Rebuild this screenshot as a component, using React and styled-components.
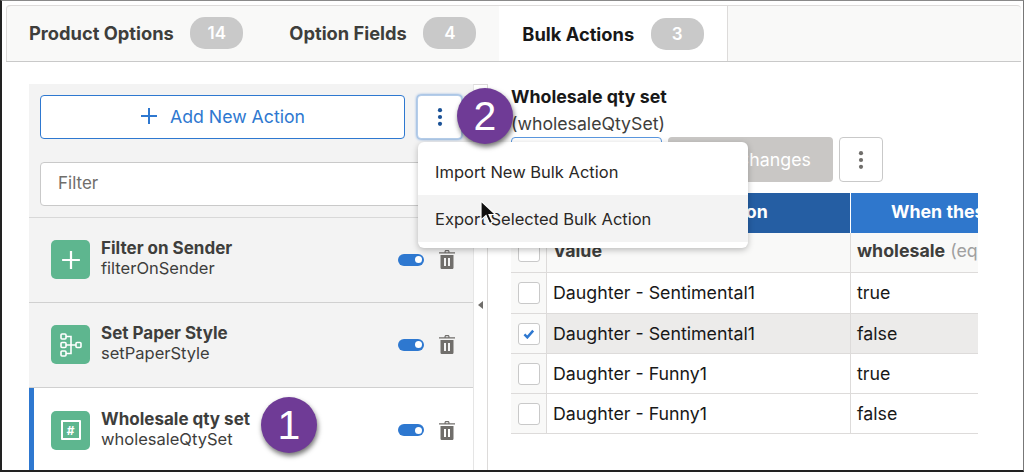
import styled, { createGlobalStyle } from 'styled-components';

const GlobalStyle = createGlobalStyle`
  html, body {
    margin: 0;
    padding: 0;
    background: #fff;
  }
  * {
    box-sizing: border-box;
  }
`;

const tabs = [
  { label: 'Product Options', count: 14 },
  { label: 'Option Fields', count: 4 },
  { label: 'Bulk Actions', count: 3, active: true },
];

const actions = [
  { title: 'Filter on Sender', name: 'filterOnSender', icon: 'plus' },
  { title: 'Set Paper Style', name: 'setPaperStyle', icon: 'tree' },
  { title: 'Wholesale qty set', name: 'wholesaleQtySet', icon: 'hash', selected: true },
];

const rows = [
  { value: 'Daughter - Sentimental1', wholesale: 'true' },
  { value: 'Daughter - Sentimental1', wholesale: 'false', checked: true },
  { value: 'Daughter - Funny1', wholesale: 'true' },
  { value: 'Daughter - Funny1', wholesale: 'false' },
];

const KebabIcon = () => (
  <svg width="6" height="18" viewBox="0 0 6 18" fill="currentColor">
    <circle cx="3" cy="2.2" r="2.1" />
    <circle cx="3" cy="9" r="2.1" />
    <circle cx="3" cy="15.8" r="2.1" />
  </svg>
);

const PlusIcon = ({ size = 18, width = 2 }) => (
  <svg width={size} height={size} viewBox="0 0 18 18" stroke="currentColor" strokeWidth={width} fill="none">
    <path d="M9 1v16M1 9h16" />
  </svg>
);

const TreeIcon = () => (
  <svg width="22" height="24" viewBox="0 0 22 24" stroke="#fff" strokeWidth="1.6" fill="none">
    <rect x="1" y="1" width="5" height="5" rx="1" />
    <rect x="1" y="9.5" width="5" height="5" rx="1" />
    <rect x="1" y="18" width="5" height="5" rx="1" />
    <rect x="16" y="9.5" width="5" height="5" rx="1" />
    <path d="M6 3.5h5v17H6M6 12h10" />
  </svg>
);

const TrashIcon = () => (
  <svg width="16" height="19" viewBox="0 0 16 19" fill="#706e6b">
    <path d="M5.5 2.2V1.5C5.5.7 6.2 0 7 0h2c.8 0 1.5.7 1.5 1.5v.7H16v1.3H0V2.2zm1.2 0h2.6v-.7c0-.2-.1-.3-.3-.3H7c-.2 0-.3.1-.3.3z" />
    <path fillRule="evenodd" d="M1.5 5h13v12.4c0 .9-.7 1.600-1.600 1.600H3.100c-.9 0-1.600-.7-1.600-1.600zM5 8v8h2V8zm4 0v8h2V8z" />
  </svg>
);

const CheckIcon = () => (
  <svg width="12" height="10" viewBox="0 0 14 12" fill="none" stroke="#2e78d0" strokeWidth="3">
    <path d="M1.5 6.500l3.500 3.500 7-8" />
  </svg>
);

const Frame = styled.div`
  width: 1024px;
  height: 472px;
  overflow: hidden;
  position: relative;
  display: flex;
  flex-direction: column;
  padding: 4px 2px 0 4px;
  background: #fff;
  border-top: 1px solid #8a8a8a;
  border-left: 2px solid #222;
  border-right: 1px solid #777;
  border-bottom: 2px solid #222;
  font-family: Inter, "Liberation Sans", sans-serif;
  color: #181818;
`;

const TabBar = styled.nav`
  display: flex;
  flex: 0 0 56px;
  background: #f9f9f8;
  border-top: 1px solid #dddbda;
  border-bottom: 1px solid #c9c9c9;
  border-radius: 4px 4px 0 0;
  box-shadow: inset 1px 0 0 #dddbda;
`;

const Tab = styled.div`
  display: flex;
  align-items: center;
  gap: 16.5px;
  height: ${(p) => (p.$active ? '55px' : '54px')};
  padding: 0 23px;
  font-size: 18.3px;
  font-weight: 700;
  color: ${(p) => (p.$active ? '#181818' : '#3e3e3c')};
  background: ${(p) => (p.$active ? '#fff' : 'transparent')};
  border-right: ${(p) => (p.$active ? '1px solid #dddbda' : 'none')};
`;

const TabCount = styled.span`
  display: flex;
  align-items: center;
  justify-content: center;
  min-width: 53px;
  height: 32px;
  padding: 0 17px;
  border-radius: 15px;
  background: #c9c9c9;
  color: #fff;
  font-size: 17px;
  font-weight: 600;
`;

const Body = styled.div`
  flex: 1;
  min-height: 0;
  display: flex;
  align-items: stretch;
  padding: 22px 0 0 23px;
`;

const Sidebar = styled.aside`
  flex: 0 0 444px;
  display: flex;
  flex-direction: column;
  background: #f3f3f3;
`;

const SidebarHead = styled.div`
  flex: 0 0 134px;
  display: flex;
  flex-direction: column;
  gap: 23px;
  padding: 11px 11px 0;
  border-bottom: 1px solid #d8d8d8;
`;

const AddRow = styled.div`
  display: flex;
  gap: 12px;
`;

const AddButton = styled.button`
  flex: 1;
  height: 44px;
  display: flex;
  align-items: center;
  justify-content: center;
  gap: 12px;
  padding: 0 0 2px;
  background: #fff;
  color: #2e78d0;
  border: 1px solid #2e78d0;
  border-radius: 4px;
  font: inherit;
  font-size: 17.7px;
`;

const KebabButton = styled.button`
  flex: 0 0 ${(p) => (p.$muted ? '44px' : '45px')};
  height: ${(p) => (p.$muted ? '45px' : '44px')};
  display: flex;
  align-items: center;
  justify-content: center;
  padding: 0;
  background: #fff;
  color: ${(p) => (p.$muted ? '#706e6b' : '#1b5297')};
  border: 1px solid ${(p) => (p.$muted ? '#c9c9c9' : '#b5cde9')};
  border-radius: 4px;
  box-shadow: ${(p) => (p.$muted ? 'none' : '0 0 3px #2e78d0')};
`;

const FilterInput = styled.input`
  height: 44px;
  padding: 0 17px 2px;
  background: #fff;
  border: 1px solid #c9c9c9;
  border-radius: 4px;
  font: inherit;
  font-size: 17px;
  &::placeholder {
    color: #706e6b;
    opacity: 1;
  }
`;

const ActionRow = styled.div`
  flex: 0 0 85px;
  display: flex;
  align-items: center;
  padding: 0 18px 1px ${(p) => (p.$selected ? '17px' : '22px')};
  background: ${(p) => (p.$selected ? '#fff' : 'transparent')};
  border-left: ${(p) => (p.$selected ? '5px solid #2e78d0' : 'none')};
  border-bottom: ${(p) => (p.$selected ? 'none' : '1px solid #d0d0d0')};
`;

const ActionIcon = styled.div`
  flex: 0 0 39px;
  height: 39px;
  display: flex;
  align-items: center;
  justify-content: center;
  margin-right: 11px;
  border-radius: 5px;
  background: #5eb68f;
  color: #fff;
`;

const HashBox = styled.span`
  width: 20px;
  height: 20px;
  display: flex;
  align-items: center;
  justify-content: center;
  border: 2px solid #fff;
  border-radius: 1px;
  font-size: 12px;
  font-weight: 700;
  font-style: italic;
`;

const ActionText = styled.div`
  flex: 1;
  display: flex;
  flex-direction: column;
  padding-bottom: 3px;
  font-size: 16.5px;
  line-height: 20px;
  color: #3e3e3c;
`;

const ActionTitle = styled.strong`
  font-size: 17px;
  font-weight: 700;
`;

const ToggleTrack = styled.span`
  position: relative;
  width: 26px;
  height: 12px;
  margin-right: 15px;
  border-radius: 6px;
  background: #2e78d0;
  &::after {
    content: '';
    position: absolute;
    top: 2.5px;
    right: 2.5px;
    width: 7px;
    height: 7px;
    border-radius: 50%;
    background: #fff;
  }
`;

const Splitter = styled.div`
  flex: 0 0 15px;
  display: flex;
  align-items: center;
  justify-content: center;
  padding-top: 54px;
  background: #fff;
  border-top: 1px solid #dddbda;
  border-left: 1px solid #e5e5e5;
  border-right: 1px solid #dddbda;
`;

const SplitterArrow = styled.span`
  width: 0;
  height: 0;
  border-top: 4px solid transparent;
  border-bottom: 4px solid transparent;
  border-right: 5px solid #706e6b;
`;

const Detail = styled.section`
  flex: 0 0 467px;
  margin-left: 23px;
  margin-top: 1px;
  display: flex;
  flex-direction: column;
`;

const DetailTitle = styled.h2`
  margin: 0 0 2px;
  font-size: 17.8px;
  line-height: 24px;
  font-weight: 700;
`;

const DetailName = styled.div`
  font-size: 17.7px;
  line-height: 26px;
  color: #3e3e3c;
`;

const ButtonRow = styled.div`
  display: flex;
  gap: 6px;
`;

const OutlineButton = styled.button`
  flex: 0 0 151px;
  height: 45px;
  background: #fff;
  color: #2e78d0;
  border: 1px solid #5a97de;
  border-radius: 4px;
  font: inherit;
  font-size: 16px;
`;

const DisabledButton = styled.button`
  flex: 0 0 165px;
  height: 45px;
  background: #c9c7c5;
  color: #fff;
  border: none;
  border-radius: 4px;
  font: inherit;
  font-size: 17.8px;
`;

const Table = styled.div`
  margin-top: 11px;
  display: grid;
  grid-template-columns: 36px 304px 127px;
  overflow: hidden;
  font-size: 17.8px;
`;

const HeadCell = styled.div`
  height: 40px;
  display: flex;
  align-items: center;
  justify-content: ${(p) => (p.$clip ? 'flex-start' : 'center')};
  padding: 0 0 3px ${(p) => (p.$clip ? '40px' : '0')};
  white-space: nowrap;
  overflow: hidden;
  background: ${(p) => (p.$dark ? '#255ea3' : '#2f77cc')};
  border-right: ${(p) => (p.$divided ? '1px solid #fff' : 'none')};
  color: #fff;
  font-weight: 700;
`;

const CheckCell = styled.div`
  height: ${(p) => (p.$tall ? '41px' : '40px')};
  display: flex;
  align-items: center;
  justify-content: center;
  padding-bottom: ${(p) => (p.$head ? '4px' : '0')};
  background: #f9f9f8;
  border-bottom: 1px solid #dddbda;
  border-right: 1px solid #dddbda;
`;

const Cell = styled.div`
  height: ${(p) => (p.$tall ? '41px' : '40px')};
  display: flex;
  align-items: center;
  padding: 0 0 ${(p) => (p.$head ? '5px' : '1px')} 6px;
  white-space: nowrap;
  overflow: hidden;
  background: ${(p) => (p.$head ? '#f9f9f8' : p.$selected ? '#ecebea' : '#fff')};
  border-bottom: 1px solid #dddbda;
  border-right: ${(p) => (p.$divided ? '1px solid #dddbda' : 'none')};
  color: ${(p) => (p.$head ? '#3e3e3c' : '#181818')};
  font-weight: ${(p) => (p.$head ? 700 : 400)};
`;

const Operator = styled.span`
  margin-left: 5px;
  font-weight: 400;
  color: #a0a0a0;
`;

const CheckBox = styled.span`
  width: 22px;
  height: 22px;
  display: flex;
  align-items: center;
  justify-content: center;
  background: #fff;
  border: 1px solid #c9c9c9;
  border-radius: 3px;
`;

const Menu = styled.ul`
  position: absolute;
  top: 141px;
  left: 416px;
  width: 330px;
  margin: 0;
  padding: 6px 0;
  list-style: none;
  background: #fff;
  border-radius: 6px;
  box-shadow: 0 2px 6px rgba(0, 0, 0, 0.25);
  font-size: 16.5px;
  color: #2b2826;
`;

const MenuItem = styled.li`
  height: 47px;
  display: flex;
  align-items: center;
  padding-left: 17px;
  background: ${(p) => (p.$hover ? '#f3f3f3' : 'transparent')};
`;

const Callout = styled.div`
  position: absolute;
  left: ${(p) => p.$x}px;
  top: ${(p) => p.$y}px;
  width: 56px;
  height: 56px;
  display: flex;
  align-items: center;
  justify-content: center;
  border-radius: 50%;
  background: #6f3b96;
  color: #fff;
  font-family: "Liberation Sans", Arial, sans-serif;
  font-size: 41px;
  box-shadow: 1px 3px 5px rgba(0, 0, 0, 0.55);
`;

const Cursor = styled.svg`
  position: absolute;
  left: 477px;
  top: 199px;
`;

const App = () => (
  <Frame>
    <GlobalStyle />
    <TabBar>
      {tabs.map((tab) => (
        <Tab key={tab.label} $active={tab.active}>
          {tab.label}
          <TabCount>{tab.count}</TabCount>
        </Tab>
      ))}
    </TabBar>
    <Body>
      <Sidebar>
        <SidebarHead>
          <AddRow>
            <AddButton>
              <PlusIcon />
              Add New Action
            </AddButton>
            <KebabButton>
              <KebabIcon />
            </KebabButton>
          </AddRow>
          <FilterInput placeholder="Filter" />
        </SidebarHead>
        {actions.map((action) => (
          <ActionRow key={action.name} $selected={action.selected}>
            <ActionIcon>
              {action.icon === 'plus' && <PlusIcon size={20} />}
              {action.icon === 'tree' && <TreeIcon />}
              {action.icon === 'hash' && <HashBox>#</HashBox>}
            </ActionIcon>
            <ActionText>
              <ActionTitle>{action.title}</ActionTitle>
              {action.name}
            </ActionText>
            <ToggleTrack />
            <TrashIcon />
          </ActionRow>
        ))}
      </Sidebar>
      <Splitter>
        <SplitterArrow />
      </Splitter>
      <Detail>
        <DetailTitle>Wholesale qty set</DetailTitle>
        <DetailName>(wholesaleQtySet)</DetailName>
        <ButtonRow>
          <OutlineButton>Test Action</OutlineButton>
          <DisabledButton>Save Changes</DisabledButton>
          <KebabButton $muted>
            <KebabIcon />
          </KebabButton>
        </ButtonRow>
        <Table>
          <HeadCell $dark />
          <HeadCell $dark $divided>Selected Option</HeadCell>
          <HeadCell $clip>When these fields match</HeadCell>
          <CheckCell $head>
            <CheckBox />
          </CheckCell>
          <Cell $head $divided>Value</Cell>
          <Cell $head>
            wholesale<Operator>(equals)</Operator>
          </Cell>
          {rows.map((row, i) => [
            <CheckCell key={`c${i}`} $tall={i === 0}>
              <CheckBox>{row.checked && <CheckIcon />}</CheckBox>
            </CheckCell>,
            <Cell key={`v${i}`} $tall={i === 0} $divided $selected={row.checked}>
              {row.value}
            </Cell>,
            <Cell key={`w${i}`} $tall={i === 0} $selected={row.checked}>
              {row.wholesale}
            </Cell>,
          ])}
        </Table>
      </Detail>
    </Body>
    <Menu>
      <MenuItem>Import New Bulk Action</MenuItem>
      <MenuItem $hover>Export Selected Bulk Action</MenuItem>
    </Menu>
    <Callout $x={455} $y={87}>2</Callout>
    <Callout $x={259} $y={396}>1</Callout>
    <Cursor width="18" height="26" viewBox="0 0 18 26">
      <path d="M2 1v19l5-4.5 3.5 8 3-1.3-3.5-7.7h6.5z" fill="#111" stroke="#fff" strokeWidth="1.2" />
    </Cursor>
  </Frame>
);

export default App;
